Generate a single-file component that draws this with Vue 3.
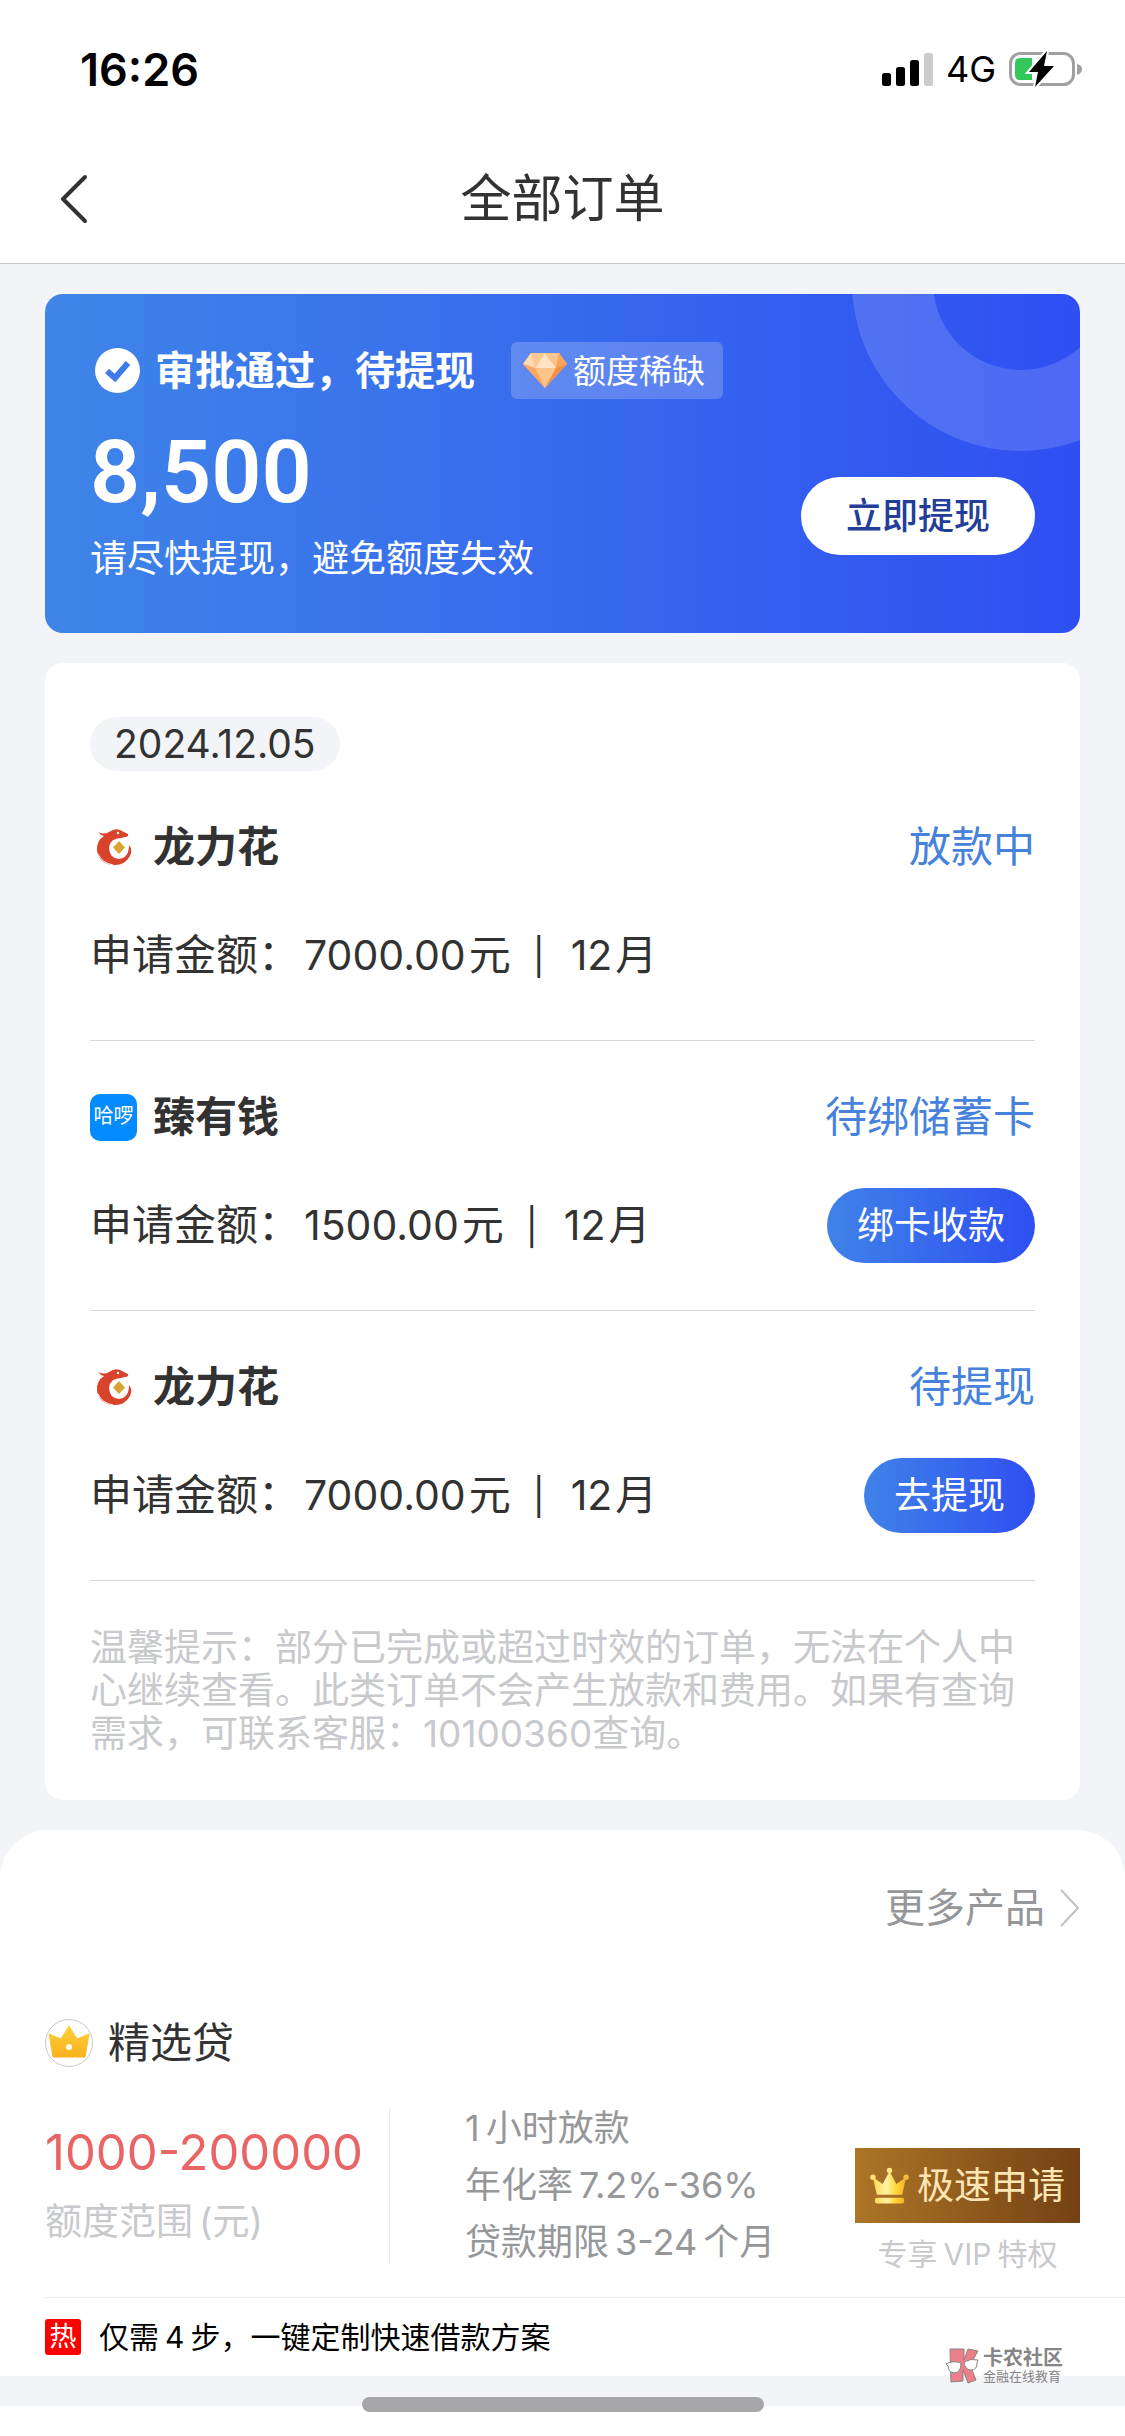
<template>
  <div class="page">
    <header class="header">
      <div class="status-bar">
        <span class="time">16:26</span>
        <div class="signals">
          <svg class="signal" viewBox="0 0 51 33" aria-hidden="true">
            <rect x="0" y="20" width="9" height="13" rx="2.5" />
            <rect x="14" y="14" width="9" height="19" rx="2.5" />
            <rect x="28" y="7" width="9" height="26" rx="2.5" />
            <rect x="42" y="0" width="9" height="33" rx="2.5" fill="#ccc" />
          </svg>
          <span class="network">4G</span>
          <svg class="battery" viewBox="0 0 74 38" aria-hidden="true">
            <rect x="1.5" y="3.5" width="63" height="31" rx="10" fill="none" stroke="#a0a0a0" stroke-width="3" />
            <path d="M68 14 Q73 15 73 19 Q73 23 68 25 Z" fill="#a0a0a0" />
            <path d="M11 8 H23 V30 H11 Q6 30 6 25 V13 Q6 8 11 8 Z" fill="#34c759" />
            <path d="M38 1 L20 22 H29 L26 37 L45 16 H35 Z" fill="#000" stroke="#fff" stroke-width="4" paint-order="stroke" />
          </svg>
        </div>
      </div>
      <nav class="nav">
        <button class="back" type="button" aria-label="返回">
          <svg viewBox="0 0 28 50" aria-hidden="true">
            <path d="M25 3 L3 25 L25 47" fill="none" stroke="#323233" stroke-width="4" stroke-linecap="round" stroke-linejoin="round" />
          </svg>
        </button>
        <h1 class="nav-title">全部订单</h1>
      </nav>
    </header>

    <main>
      <section class="quota">
        <div class="quota-head">
          <svg class="check" viewBox="0 0 45 45" aria-hidden="true">
            <circle cx="22.5" cy="22.5" r="22.5" fill="#fff" />
            <path d="M12 23 L20 30 L33 15" fill="none" stroke="#3f7be8" stroke-width="6" />
          </svg>
          <h2 class="quota-title">审批通过，待提现</h2>
          <span class="badge">
            <svg class="gem" viewBox="0 0 44 35" aria-hidden="true">
              <path d="M8 0 H36 L44 11 L22 35 L0 11 Z" fill="#fdb674" />
              <path d="M8 0 L12 15 L0 11 Z" fill="#ffd9b0" />
              <path d="M8 0 H22 L12 15 Z" fill="#fbc792" />
              <path d="M22 0 L33 15 H12 Z" fill="#ffe3c2" />
              <path d="M22 0 H36 L33 15 Z" fill="#fcc48e" />
              <path d="M36 0 L44 11 L33 15 Z" fill="#f9a65c" />
              <path d="M0 11 L12 15 L22 35 Z" fill="#fca65f" />
              <path d="M12 15 H33 L22 35 Z" fill="#ffc48a" />
              <path d="M33 15 L44 11 L22 35 Z" fill="#f28f42" />
            </svg>
            额度稀缺
          </span>
        </div>
        <div class="quota-body">
          <div>
            <p class="quota-amount">8,500</p>
            <p class="quota-tip">请尽快提现，避免额度失效</p>
          </div>
          <button class="withdraw-btn" type="button">立即提现</button>
        </div>
      </section>

      <section class="orders">
        <span class="date">2024.12.05</span>
        <article v-for="(order, index) in orders" :key="index" class="order">
          <div class="order-head">
            <span v-if="order.logo === 'hello'" class="logo logo-hello">哈啰</span>
            <svg v-else class="logo" viewBox="0 1 47 47" aria-hidden="true">
              <path
                d="M8 9 Q14 12 19 9 Q25 5 30 7 L38 11 Q39 14 35 14 L31 15 Q20 15 19 25 Q20 36 29 36 Q39 35 39 22 Q43 27 40 33 Q35 42 25 42 Q10 42 7 28 Q6 18 14 13 Q10 12 8 9 Z"
                fill="#d8432b"
              />
              <path d="M8 31 Q12 40 23 42" fill="none" stroke="#fff" stroke-width="1" />
              <circle cx="28" cy="10" r="1.2" fill="#fff" />
              <path d="M29 18 L35 24.5 L29 31 L23 24.5 Z" fill="#dba334" />
            </svg>
            <h3 class="order-name">{{ order.name }}</h3>
            <span class="order-status">{{ order.status }}</span>
          </div>
          <div class="order-body">
            <p class="order-info">
              申请金额：<span class="num">{{ order.amount }}</span>元<span class="bar">|</span><span class="num">{{ order.months }}</span>月
            </p>
            <button v-if="order.action" class="order-btn" type="button">{{ order.action }}</button>
          </div>
        </article>
        <p class="notice">
          温馨提示：部分已完成或超过时效的订单，无法在个人中心继续查看。此类订单不会产生放款和费用。如果有查询需求，可联系客服：10100360查询。
        </p>
      </section>

      <section class="products">
        <a class="more" href="#">
          更多产品
          <svg class="more-arrow" viewBox="0 0 20 38" aria-hidden="true">
            <path d="M1 1 L18 19 L1 37" fill="none" stroke="#c0c1c4" stroke-width="2" />
          </svg>
        </a>
        <div class="product-name">
          <svg class="product-logo" viewBox="0 0 48 48" aria-hidden="true">
            <defs>
              <linearGradient id="crown" x1="0" y1="0" x2="0" y2="1">
                <stop offset="0" stop-color="#fbd03c" />
                <stop offset="1" stop-color="#f9b21c" />
              </linearGradient>
            </defs>
            <circle cx="24" cy="24" r="23.5" fill="#fff" stroke="#c8c9cc" />
            <path d="M24 7 L32 20 L44 15 L40 38 H8 L4 15 L16 20 Z" fill="url(#crown)" stroke="url(#crown)" stroke-linejoin="round" />
            <circle cx="24" cy="28" r="3" fill="#fff" />
          </svg>
          <h3>精选贷</h3>
        </div>
        <div class="product">
          <div class="range">
            <p class="range-value">1000-200000</p>
            <p class="range-label">额度范围<span class="after">(</span>元)</p>
          </div>
          <ul class="terms">
            <li>1<span class="after">小时放款</span></li>
            <li>年化率<span class="after">7.2%-36%</span></li>
            <li>贷款期限<span class="num">3-24</span>个月</li>
          </ul>
          <div class="apply">
            <button class="apply-btn" type="button">
              <svg class="apply-crown" viewBox="0 0 40 37" aria-hidden="true">
                <defs>
                  <linearGradient id="gold" x1="0" y1="0" x2="1" y2="0">
                    <stop offset="0" stop-color="#ffd84a" />
                    <stop offset="0.4" stop-color="#fff3a8" />
                    <stop offset="0.7" stop-color="#ffd633" />
                    <stop offset="1" stop-color="#f9b02a" />
                  </linearGradient>
                </defs>
                <path d="M3 10 L13 17 L20 4 L27 17 L37 10 L33 28 H7 Z" fill="url(#gold)" />
                <circle cx="3" cy="10" r="2.8" fill="#ffe070" />
                <circle cx="20" cy="3" r="2.8" fill="#ffe680" />
                <circle cx="37" cy="10" r="2.8" fill="#fbb83a" />
                <rect x="5" y="31" width="30" height="6" rx="2" fill="url(#gold)" />
              </svg>
              极速申请
            </button>
            <span class="vip">专享<span class="num">VIP</span>特权</span>
          </div>
        </div>
        <div class="hot">
          <span class="hot-tag">热</span>
          <p>仅需<span class="num">4</span>步，一键定制快速借款方案</p>
        </div>
      </section>
    </main>

    <footer class="safe-area">
      <div class="home-indicator"></div>
    </footer>

    <div class="watermark">
      <svg class="watermark-logo" viewBox="0 0 35 36" aria-hidden="true">
        <path d="M5 1 H19 V12 L23 1 L33 3 L25 17 L31 32 L23 35 L18 22 V33 L6 34 Z" fill="#ee7f88" stroke="#858585" />
        <path d="M1 16 Q8 12 16 15 Q16 25 9 25 Q3 24 3 18 Z" fill="#fff" stroke="#858585" />
        <path d="M19 14 Q26 10 33 12 L32 15 Q32 22 26 22 Q20 22 19 14 Z" fill="#fff" stroke="#858585" />
      </svg>
      <div>
        <p class="watermark-name">卡农社区</p>
        <p class="watermark-sub">金融在线教育</p>
      </div>
    </div>
  </div>
</template>

<script setup>
import { ref } from 'vue';

const orders = ref([
  { name: '龙力花', logo: 'dragon', status: '放款中', amount: '7000.00', months: 12 },
  { name: '臻有钱', logo: 'hello', status: '待绑储蓄卡', amount: '1500.00', months: 12, action: '绑卡收款' },
  { name: '龙力花', logo: 'dragon', status: '待提现', amount: '7000.00', months: 12, action: '去提现' },
]);
</script>

<style>
body {
  margin: 0;
  background: #f3f4f8;
}
</style>

<style scoped>
.page {
  position: relative;
  display: flex;
  flex-direction: column;
  min-height: 100vh;
  font-family: Inter, "Noto Sans CJK SC", sans-serif;
  font-size: 37px;
  color: #323233;
}

h1,
h2,
h3,
p,
ul {
  margin: 0;
  padding: 0;
  list-style: none;
}

button {
  border: none;
  font-family: inherit;
  font-size: 37px;
  line-height: 42px;
  cursor: pointer;
}

.num {
  margin: 0 6px;
}

.after {
  margin-left: 6px;
}

.header {
  background: #fff;
  border-bottom: 1px solid #c8c8cc;
}

.status-bar {
  display: flex;
  justify-content: space-between;
  align-items: center;
  box-sizing: border-box;
  height: 135px;
  padding: 3px 42px 0 80px;
  color: #000;
}

.time {
  font-size: 45px;
  font-weight: 600;
}

.signals {
  display: flex;
  align-items: center;
  gap: 13px;
}

.signal {
  width: 51px;
  height: 33px;
}

.network {
  font-size: 36px;
}

.battery {
  width: 74px;
  height: 38px;
}

.nav {
  display: grid;
  grid-template-columns: 90px 1fr 90px;
  align-items: center;
  height: 128px;
}

.back {
  display: flex;
  padding: 0 0 0 60px;
  background: none;
}

.back svg {
  width: 28px;
  height: 50px;
}

.nav-title {
  font-size: 51px;
  font-weight: 400;
  line-height: 60px;
  text-align: center;
}

.quota {
  position: relative;
  overflow: hidden;
  margin: 30px 45px;
  padding: 48px 45px;
  border-radius: 18px;
  color: #fff;
  background: linear-gradient(90deg, #3f85e8, #2f4ff2);
}

.quota::after {
  content: "";
  position: absolute;
  top: -181px;
  right: -110px;
  width: 176px;
  height: 176px;
  border: 81px solid rgba(255, 255, 255, 0.15);
  border-radius: 50%;
}

.quota-head {
  display: flex;
  align-items: center;
}

.check {
  width: 45px;
  height: 45px;
  margin: 0 15px 0 5px;
}

.quota-title {
  font-size: 40px;
  font-weight: 700;
  line-height: 54px;
}

.badge {
  display: flex;
  align-items: center;
  gap: 6px;
  height: 57px;
  margin-left: 36px;
  padding: 0 18px 0 12px;
  border-radius: 6px;
  font-size: 33px;
  line-height: 36px;
  background: rgba(255, 255, 255, 0.2);
}

.gem {
  width: 44px;
  height: 35px;
}

.quota-body {
  display: flex;
  justify-content: space-between;
  align-items: flex-end;
  margin-top: 28px;
}

.quota-amount {
  font-family: Roboto, sans-serif;
  font-size: 88px;
  font-weight: 600;
  line-height: 90px;
}

.quota-tip {
  margin-top: 16px;
  line-height: 52px;
}

.withdraw-btn {
  height: 78px;
  margin-bottom: 30px;
  padding: 0 45px;
  border-radius: 39px;
  font-size: 36px;
  font-weight: 500;
  color: #223e98;
  background: #fff;
}

.orders {
  margin: 0 45px 30px;
  padding: 54px 45px 45px;
  border-radius: 18px;
  background: #fff;
}

.date {
  display: inline-block;
  padding: 0 24px;
  border-radius: 27px;
  font-size: 39px;
  line-height: 54px;
  vertical-align: top;
  background: #f3f4f8;
}

.order {
  padding: 52px 0 47px;
  border-bottom: 1px solid #d8d8da;
}

.order-head {
  display: flex;
  align-items: center;
  height: 48px;
}

.logo {
  width: 47px;
  height: 47px;
  margin-right: 16px;
}

.logo-hello {
  border-radius: 10px;
  font-size: 20px;
  line-height: 45px;
  text-align: center;
  color: #fff;
  background: #048bff;
}

.order-name {
  font-size: 42px;
  font-weight: 700;
  line-height: 48px;
}

.order-status {
  margin-left: auto;
  font-size: 42px;
  line-height: 48px;
  color: #4681dc;
}

.order-body {
  display: flex;
  justify-content: space-between;
  align-items: center;
  height: 75px;
  margin-top: 47px;
}

.order-info {
  font-size: 42px;
  line-height: 48px;
}

.order-info .num {
  margin: 0 3px 0 4px;
  font-size: 41px;
}

.order-info .bar {
  margin: 0 22px;
  font-size: 36px;
}

.order-btn {
  height: 75px;
  padding: 0 30px;
  border-radius: 38px;
  color: #fff;
  background: linear-gradient(90deg, #3f82e8, #2f4ff2);
}

.notice {
  margin-top: 45px;
  line-height: 43px;
  color: #c8c9cc;
}

.products {
  padding-top: 51px;
  border-radius: 48px 48px 0 0;
  background: #fff;
}

.more {
  display: flex;
  justify-content: flex-end;
  align-items: center;
  gap: 15px;
  margin-right: 45px;
  font-size: 40px;
  line-height: 54px;
  color: #969799;
  text-decoration: none;
}

.more-arrow {
  width: 20px;
  height: 38px;
}

.product-name {
  display: flex;
  align-items: center;
  gap: 15px;
  margin: 84px 45px 33px;
}

.product-name h3 {
  font-size: 42px;
  font-weight: 400;
  line-height: 48px;
}

.product-logo {
  width: 48px;
  height: 48px;
}

.product {
  display: grid;
  grid-template-columns: 345px 1fr auto;
  align-items: center;
  margin-left: 45px;
  padding: 0 45px 26px 0;
  border-bottom: 1px solid #ebedf0;
}

.range {
  box-sizing: border-box;
  padding: 15px 0;
  border-right: 1px solid #ebedf0;
}

.range-value {
  font-size: 49px;
  line-height: 60px;
  color: #e96565;
}

.range-label {
  margin-top: 12px;
  line-height: 54px;
  color: #c8c9cc;
}

.terms {
  padding-left: 75px;
  font-size: 36px;
  line-height: 57px;
  color: #969799;
}

.apply {
  display: flex;
  flex-direction: column;
  align-items: center;
  gap: 15px;
  padding-top: 48px;
}

.apply-btn {
  display: flex;
  align-items: center;
  gap: 8px;
  height: 75px;
  padding: 0 15px;
  color: #fde6b4;
  background: linear-gradient(90deg, #ad7527, #744114);
}

.apply-crown {
  width: 39px;
  height: 37px;
}

.vip {
  font-size: 30px;
  line-height: 33px;
  color: #c8c9cc;
}

.hot {
  display: flex;
  align-items: center;
  gap: 18px;
  height: 78px;
  padding: 0 45px;
  font-size: 30px;
  line-height: 36px;
  color: #000;
}

.hot-tag {
  width: 36px;
  height: 36px;
  border-radius: 3px;
  font-size: 27px;
  text-align: center;
  color: #fff;
  background: #fe0000;
}

.safe-area {
  height: 30px;
  margin-top: auto;
  background: #fff;
}

.home-indicator {
  position: absolute;
  bottom: 24px;
  left: 50%;
  width: 402px;
  height: 15px;
  margin-left: -201px;
  border-radius: 8px;
  background: #a7a7aa;
}

.watermark {
  position: absolute;
  right: 62px;
  bottom: 52px;
  display: flex;
  align-items: center;
  gap: 3px;
  color: #858585;
}

.watermark-logo {
  width: 35px;
  height: 36px;
}

.watermark-name {
  font-size: 20px;
  font-weight: 700;
  line-height: 20px;
}

.watermark-sub {
  font-size: 13px;
  line-height: 16px;
}
</style>
